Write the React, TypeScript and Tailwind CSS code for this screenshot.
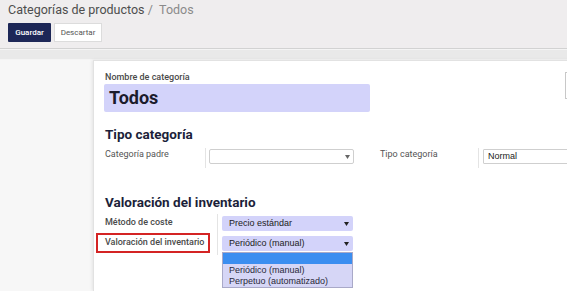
import React from "react";

const Caret = ({ color = "#555" }: { color?: string }) => (
  <svg width="5" height="4" viewBox="0 0 5 4" className="shrink-0">
    <path d="M0 0 L5 0 L2.5 4 Z" fill={color} />
  </svg>
);

export default function App() {
  const roboto = { fontFamily: "Roboto, 'Liberation Sans', sans-serif" };
  const arial = { fontFamily: "'Liberation Sans', Arial, sans-serif" };
  return (
    <div className="w-[567px] h-[291px] overflow-hidden bg-[#f7f7f7] flex flex-col" style={roboto}>
      {/* control panel */}
      <div className="h-[49px] shrink-0 bg-[#efedee] border-b border-[#d2d2d2] px-[8px] pt-[2px] flex flex-col">
        <div className="text-[12.5px] leading-[16px] text-[#4d4d4d] whitespace-nowrap">
          Categorías de productos<span className="text-[#8a8a8a]"> / &nbsp;Todos</span>
        </div>
        <div className="flex gap-[3px] mt-[5px]">
          <div className="h-[19px] w-[43px] bg-[#1d2757] text-white text-[8px] font-medium flex items-center justify-center rounded-[1px]">
            Guardar
          </div>
          <div className="h-[19px] w-[48px] bg-white border border-[#dcdcdc] text-[#555] text-[8px] flex items-center justify-center">
            Descartar
          </div>
        </div>
      </div>
      <div className="h-[11px] shrink-0 bg-[#e9e9e9] border-t border-[#f4f4f4] border-b border-[#dedede]" />
      {/* body */}
      <div className="flex-1 flex pl-[93px]">
        <div className="flex-1 bg-white border-l border-t border-[#e2e2e2] shadow-[-1px_0_3px_rgba(0,0,0,0.08)] pl-[10px] pt-[11px] relative">
          {/* title row */}
          <div className="flex items-start">
            <div className="flex flex-col">
              <div className="text-[9px] leading-[11px] font-medium text-[#4a4a4a] ml-[1px]">Nombre de categoría</div>
              <div className="mt-[1px] w-[266px] h-[28px] bg-[#d3d3fa] rounded-[2px] flex items-center pl-[5px]">
                <span className="text-[18px] font-bold text-[#1b1b2c] leading-none">Todos</span>
              </div>
            </div>
            <div className="ml-[195px] mt-[0px] w-[40px] h-[27px] border border-[#c8c8c8] bg-white shrink-0" />
          </div>

          {/* Tipo categoría */}
          <div className="mt-[14px] ml-[1px] text-[13.5px] leading-[16px] font-bold text-[#1c1f3a]">Tipo categoría</div>
          <div className="mt-[6px] flex items-start ml-[1px]">
            <div className="w-[101px] h-[20px] border-r border-[#e4e4e4] text-[9px] leading-[12px] text-[#555]">
              Categoría padre
            </div>
            <div
              className="ml-[3px] mt-[1px] w-[145px] h-[15px] border border-[#cfcfcf] rounded-[2px] bg-white flex items-center justify-end pr-[3px]"
              style={arial}
            >
              <Caret color="#666" />
            </div>
            <div className="ml-[26px] w-[99px] h-[20px] border-r border-[#e4e4e4] text-[9px] leading-[12px] text-[#555]">
              Tipo categoría
            </div>
            <div
              className="ml-[4px] mt-[1px] w-[110px] h-[15px] border border-[#cfcfcf] rounded-[1px] bg-white flex items-center pl-[4px] text-[9px] text-[#222] shrink-0"
              style={arial}
            >
              Normal
            </div>
          </div>

          {/* Valoración del inventario */}
          <div className="mt-[26px] ml-[1px] text-[13.5px] leading-[16px] font-bold text-[#1c1f3a]">
            Valoración del inventario
          </div>
          <div className="mt-[4px] flex ml-[1px]">
            <div className="w-[113px] border-r border-[#e4e4e4] flex flex-col">
              <div className="h-[21px] pt-[2px] text-[9px] leading-[12px] font-medium text-[#4a4a4a]">Método de coste</div>
              <div className="h-[20px] pt-[1px] text-[9px] leading-[12px] font-medium text-[#4a4a4a] relative whitespace-nowrap">
                Valoración del inventario
                <div className="absolute left-[-9px] top-[-2px] w-[114px] h-[20px] border-2 border-[#d42424]" />
              </div>
            </div>
            <div className="ml-[4px] flex flex-col" style={arial}>
              <div className="mt-[2px] w-[131px] h-[15px] bg-[#d3d3fa] rounded-[2px] flex items-center justify-between pl-[7px] pr-[4px] text-[9px] text-[#222]">
                Precio estándar
                <Caret color="#222" />
              </div>
              <div className="mt-[5px] relative w-[131px]">
                <div className="w-[131px] h-[15px] bg-[#d3d3fa] rounded-[2px] flex items-center justify-between pl-[7px] pr-[4px] text-[9px] text-[#222]">
                  Periódico (manual)
                  <Caret color="#222" />
                </div>
                <div className="absolute left-0 top-[16px] w-[131px] bg-[#d6d6f6] border border-[#a9a9c8] text-[9px] leading-[11px] text-[#2a2a3a]">
                  <div className="h-[11px] bg-[#3b8ef0]" />
                  <div className="pl-[6px] pt-[1px]">Periódico (manual)</div>
                  <div className="pl-[6px]">Perpetuo (automatizado)</div>
                </div>
              </div>
            </div>
          </div>
        </div>
      </div>
    </div>
  );
}
